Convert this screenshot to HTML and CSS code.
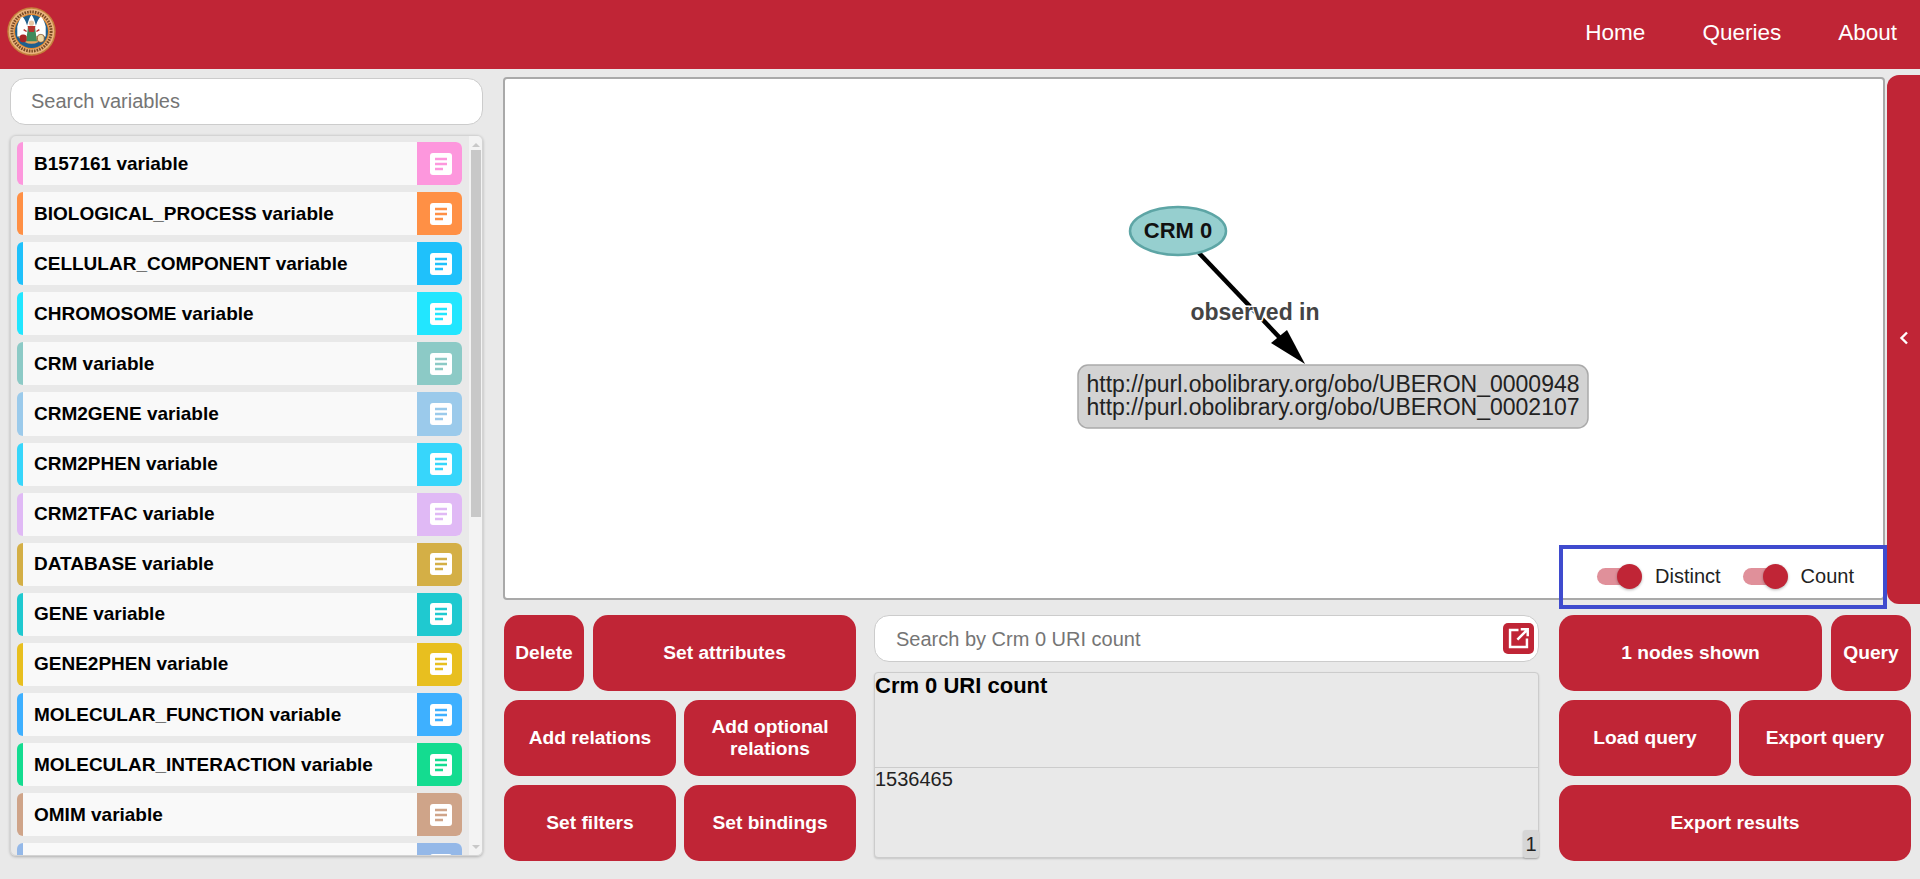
FILE: index.html
```html
<!DOCTYPE html>
<html lang="en">
<head>
<meta charset="utf-8">
<title>Query builder</title>
<link rel="stylesheet" href="styles.css">
</head>
<body>
<header class="navbar">
  <svg class="logo" viewBox="0 0 50 50" aria-label="University seal">
    <circle cx="25" cy="25" r="24.7" fill="#c4803c"/>
    <circle cx="25" cy="25" r="23.2" fill="#e9b27c"/>
    <circle cx="25" cy="25" r="20" fill="none" stroke="#7a4a24" stroke-width="3" stroke-dasharray="1.6 1.1"/>
    <circle cx="25" cy="25" r="18" fill="#e58a30"/>
    <circle cx="25" cy="25" r="16.8" fill="#1f5f8e"/>
    <path d="M10.5 30V20q2-8 5-10q3 2 5 9q2-8 4.500-11q2.500 3 4.500 11q2-7 5-9q3 2 5 10v10z" fill="#fff"/>
    <path d="M11 30q14 15 28 0z" fill="#e9a55c"/>
    <circle cx="25" cy="16.500" r="2.600" fill="#e8c7a5"/>
    <path d="M21.500 19.500h7l2 15.500h-11z" fill="#3f8a5b"/>
    <path d="M21 19.500h8l-1.500 6h-5z" fill="#b6332e"/>
    <path d="M17 23l3 2M33 23l-3 2" stroke="#b6332e" stroke-width="1.500"/>
    <rect x="13" y="28" width="7" height="8" rx="3" fill="#a92525"/>
    <rect x="31" y="28" width="7" height="8" rx="3" fill="#efd9a5" stroke="#7a4a24" stroke-width=".8"/>
  </svg>
  <nav class="nav-links">
    <a class="nav-link">Home</a>
    <a class="nav-link">Queries</a>
    <a class="nav-link">About</a>
  </nav>
</header>
<main class="main">
  <aside class="sidebar">
    <div class="search search-vars"><span class="placeholder">Search variables</span></div>
    <div class="var-panel">
      <div class="var-list">
        <div class="var-row" style="--c:#fd97dd"><span class="var-name">B157161 <span class="var-kind">variable</span></span><span class="var-btn"><svg class="doc" viewBox="0 0 22 22"><rect width="22" height="22" rx="3"/><path d="M5 6h12M5 11h12M5 16h8"/></svg></span></div>
        <div class="var-row" style="--c:#ff9045"><span class="var-name">BIOLOGICAL_PROCESS <span class="var-kind">variable</span></span><span class="var-btn"><svg class="doc" viewBox="0 0 22 22"><rect width="22" height="22" rx="3"/><path d="M5 6h12M5 11h12M5 16h8"/></svg></span></div>
        <div class="var-row" style="--c:#1fc1fb"><span class="var-name">CELLULAR_COMPONENT <span class="var-kind">variable</span></span><span class="var-btn"><svg class="doc" viewBox="0 0 22 22"><rect width="22" height="22" rx="3"/><path d="M5 6h12M5 11h12M5 16h8"/></svg></span></div>
        <div class="var-row" style="--c:#22e6ff"><span class="var-name">CHROMOSOME <span class="var-kind">variable</span></span><span class="var-btn"><svg class="doc" viewBox="0 0 22 22"><rect width="22" height="22" rx="3"/><path d="M5 6h12M5 11h12M5 16h8"/></svg></span></div>
        <div class="var-row" style="--c:#8ccac6"><span class="var-name">CRM <span class="var-kind">variable</span></span><span class="var-btn"><svg class="doc" viewBox="0 0 22 22"><rect width="22" height="22" rx="3"/><path d="M5 6h12M5 11h12M5 16h8"/></svg></span></div>
        <div class="var-row" style="--c:#9bcaeb"><span class="var-name">CRM2GENE <span class="var-kind">variable</span></span><span class="var-btn"><svg class="doc" viewBox="0 0 22 22"><rect width="22" height="22" rx="3"/><path d="M5 6h12M5 11h12M5 16h8"/></svg></span></div>
        <div class="var-row" style="--c:#37d6fb"><span class="var-name">CRM2PHEN <span class="var-kind">variable</span></span><span class="var-btn"><svg class="doc" viewBox="0 0 22 22"><rect width="22" height="22" rx="3"/><path d="M5 6h12M5 11h12M5 16h8"/></svg></span></div>
        <div class="var-row" style="--c:#e0b9f5"><span class="var-name">CRM2TFAC <span class="var-kind">variable</span></span><span class="var-btn"><svg class="doc" viewBox="0 0 22 22"><rect width="22" height="22" rx="3"/><path d="M5 6h12M5 11h12M5 16h8"/></svg></span></div>
        <div class="var-row" style="--c:#d4af46"><span class="var-name">DATABASE <span class="var-kind">variable</span></span><span class="var-btn"><svg class="doc" viewBox="0 0 22 22"><rect width="22" height="22" rx="3"/><path d="M5 6h12M5 11h12M5 16h8"/></svg></span></div>
        <div class="var-row" style="--c:#1fc9d0"><span class="var-name">GENE <span class="var-kind">variable</span></span><span class="var-btn"><svg class="doc" viewBox="0 0 22 22"><rect width="22" height="22" rx="3"/><path d="M5 6h12M5 11h12M5 16h8"/></svg></span></div>
        <div class="var-row" style="--c:#e8bf1f"><span class="var-name">GENE2PHEN <span class="var-kind">variable</span></span><span class="var-btn"><svg class="doc" viewBox="0 0 22 22"><rect width="22" height="22" rx="3"/><path d="M5 6h12M5 11h12M5 16h8"/></svg></span></div>
        <div class="var-row" style="--c:#3eb0ff"><span class="var-name">MOLECULAR_FUNCTION <span class="var-kind">variable</span></span><span class="var-btn"><svg class="doc" viewBox="0 0 22 22"><rect width="22" height="22" rx="3"/><path d="M5 6h12M5 11h12M5 16h8"/></svg></span></div>
        <div class="var-row" style="--c:#14dc90"><span class="var-name">MOLECULAR_INTERACTION <span class="var-kind">variable</span></span><span class="var-btn"><svg class="doc" viewBox="0 0 22 22"><rect width="22" height="22" rx="3"/><path d="M5 6h12M5 11h12M5 16h8"/></svg></span></div>
        <div class="var-row" style="--c:#cfa489"><span class="var-name">OMIM <span class="var-kind">variable</span></span><span class="var-btn"><svg class="doc" viewBox="0 0 22 22"><rect width="22" height="22" rx="3"/><path d="M5 6h12M5 11h12M5 16h8"/></svg></span></div>
        <div class="var-row" style="--c:#94b8e8"><span class="var-name"></span><span class="var-btn"><svg class="doc" viewBox="0 0 22 22"><rect width="22" height="22" rx="3"/><path d="M5 6h12M5 11h12M5 16h8"/></svg></span></div>
      </div>
      <div class="scrollbar">
        <span class="arrow-up"></span>
        <div class="scroll-track"><div class="scroll-thumb"></div></div>
        <span class="arrow-down"></span>
      </div>
    </div>
  </aside>
  <section class="workspace">
    <div class="top-row">
      <div class="canvas">
        <svg class="graph" viewBox="0 0 1382 523">
          <line class="edge" x1="696" y1="176" x2="778" y2="262"/>
          <polygon class="edge-head" points="802,287 768,266 784,253"/>
          <ellipse class="node-ellipse" cx="675" cy="154" rx="48" ry="24"/>
          <text class="node-label" x="675" y="161">CRM 0</text>
          <text class="edge-label" x="752" y="243">observed in</text>
          <rect class="node-box" x="575" y="288" width="510" height="63" rx="10"/>
          <text class="box-label" x="830" y="315">http://purl.obolibrary.org/obo/UBERON_0000948</text>
          <text class="box-label" x="830" y="338">http://purl.obolibrary.org/obo/UBERON_0002107</text>
        </svg>
        <div class="toggles">
          <label class="toggle"><span class="track"><span class="thumb"></span></span>Distinct</label>
          <label class="toggle"><span class="track"><span class="thumb"></span></span>Count</label>
        </div>
      </div>
      <div class="side-tab">
        <svg class="chevron" viewBox="0 0 10 14"><path d="M8 1.5 2.5 7 8 12.5"/></svg>
      </div>
    </div>
    <div class="bottom-row">
      <div class="btn-grid">
        <button class="btn btn-narrow">Delete</button>
        <button class="btn btn-wide">Set attributes</button>
        <button class="btn btn-half">Add relations</button>
        <button class="btn btn-half">Add optional relations</button>
        <button class="btn btn-half">Set filters</button>
        <button class="btn btn-half">Set bindings</button>
      </div>
      <div class="results">
        <div class="search search-results">
          <span class="placeholder">Search by Crm 0 URI count</span>
          <span class="open-btn"><svg viewBox="0 0 24 24"><path d="M12 4.500H4.500v15h15V12M11 13 19.500 4.500M14 3.800h6.200V10"/></svg></span>
        </div>
        <div class="result-table">
          <div class="result-head">Crm 0 URI count</div>
          <div class="result-cell">1536465</div>
          <span class="pager">1</span>
        </div>
      </div>
      <div class="btn-grid">
        <button class="btn btn-wide">1 nodes shown</button>
        <button class="btn btn-narrow-r">Query</button>
        <button class="btn btn-half">Load query</button>
        <button class="btn btn-half">Export query</button>
        <button class="btn btn-full">Export results</button>
      </div>
    </div>
  </section>
</main>
</body>
</html>
```

FILE: styles.css
```css
* { box-sizing: border-box; }
html, body { margin: 0; height: 100%; }
body {
  background: #e9e9e9;
  font-family: "Liberation Sans", Arial, sans-serif;
  color: #212529;
  overflow: hidden;
}
.navbar {
  height: 69px;
  background: #c02536;
  display: flex;
  align-items: center;
  justify-content: space-between;
  padding-left: 7px;
}
.logo { width: 49px; height: 49px; margin-top: -6px; }
.nav-links { display: flex; margin-top: -3px; }
.nav-link { color: #fff; font-size: 22.5px; line-height: 26px; margin-right: 23px; margin-left: 34px; }

.main { display: flex; padding-left: 10px; }
.sidebar { width: 473px; margin-right: 20px; padding-top: 9px; flex: none; }
.search {
  background: #fff;
  border: 1px solid #ccc;
  border-radius: 15px;
  display: flex;
  align-items: center;
  font-size: 20px;
}
.placeholder { color: #757575; }
.search-vars { height: 47px; padding-left: 20px; padding-bottom: 1px; }
.var-panel {
  margin-top: 10px;
  height: 721px;
  display: flex;
  justify-content: space-between;
  border: 1px solid #d4d4d4;
  border-radius: 6px;
  box-shadow: 0 1px 3px rgba(0,0,0,.25);
  overflow: hidden;
}
.var-list { width: 458px; padding: 6px 0 0 6px; overflow: hidden; flex: none; }
.var-row {
  display: flex;
  align-items: stretch;
  justify-content: space-between;
  height: 43.1px;
  margin-bottom: 7px;
  width: 445px;
  flex: none;
  background: #f9f9f9;
  border-left: 6px solid var(--c);
  border-radius: 6px;
  overflow: hidden;
}
.var-name { font-size: 19px; font-weight: 700; color: #000; padding: 10.5px 0 0 11px; line-height: 22px; }
.var-kind { font-weight: 700; }
.var-btn {
  width: 45px;
  background: var(--c);
  display: flex;
  align-items: center;
  justify-content: center;
  padding-left: 2px;
}
.doc { width: 22px; height: 22px; }
.doc rect { fill: #fff; }
.doc path { fill: none; stroke: var(--c); stroke-width: 2.4; }
.scrollbar {
  width: 14px;
  background: #f3f3f3;
  display: flex;
  flex-direction: column;
  align-items: center;
  padding-top: 6px;
}
.arrow-up { width: 0; height: 0; border: 4px solid transparent; border-top: 0; border-bottom: 4px solid #c8c8c8; flex: none; margin-bottom: 3px; margin-top: 1px; }
.arrow-down { width: 0; height: 0; border: 4px solid transparent; border-bottom: 0; border-top: 4px solid #c8c8c8; flex: none; margin-bottom: 6px; }
.scroll-track { flex: 1; width: 10px; }
.scroll-thumb { height: 367px; background: #c8c8c8; }

.workspace { flex: 1; min-width: 0; padding-top: 6px; }
.top-row { display: flex; height: 529px; }
.canvas {
  position: relative;
  width: 1382px;
  height: 523px;
  margin-top: 2px;
  background: #fff;
  border: 2px solid #a9a9a9;
  border-radius: 4px;
  flex: none;
}
.graph { position: absolute; left: -2px; top: -2px; width: 1382px; height: 523px; }
.edge { stroke: #000; stroke-width: 4.5; }
.edge-head { fill: #000; }
.node-ellipse { fill: #96cfcf; stroke: #5da5a5; stroke-width: 2.5; }
.node-label { font: 700 22px "Liberation Sans", Arial, sans-serif; text-anchor: middle; fill: #111; }
.edge-label { font: 700 23px "Liberation Sans", Arial, sans-serif; text-anchor: middle; fill: #444; stroke: #fff; stroke-width: 3; paint-order: stroke; }
.node-box { fill: #d3d3d3; stroke: #aaa; stroke-width: 1.5; }
.box-label { font: 23px "Liberation Sans", Arial, sans-serif; text-anchor: middle; fill: #222; }
.toggles {
  position: absolute;
  right: -4px;
  bottom: -11px;
  width: 328px;
  height: 64px;
  border: 4px solid #3f4bce;
  display: flex;
  align-items: center;
  padding: 0 0 2px 34px;
  gap: 22px;
}
.toggle { display: flex; align-items: center; font-size: 20px; color: #222; }
.track {
  position: relative;
  display: block;
  width: 43px;
  height: 17px;
  background: #e0909a;
  border-radius: 9px;
  margin-right: 15px;
}
.thumb {
  position: absolute;
  right: -2px;
  top: -4px;
  width: 25px;
  height: 25px;
  border-radius: 50%;
  background: #c02536;
  box-shadow: 0 1px 3px rgba(0,0,0,.3);
}
.side-tab {
  width: 34px;
  height: 529px;
  margin-left: 2px;
  background: #c02536;
  border-radius: 12px 0 0 12px;
  display: flex;
  align-items: center;
  justify-content: center;
  flex: none;
}
.chevron { width: 10px; height: 14px; margin-top: -4px; }
.chevron path { fill: none; stroke: #fff; stroke-width: 2.4; }

.bottom-row { display: flex; margin-top: 11px; padding-left: 1px; }
.btn-grid {
  width: 352px;
  flex: none;
  display: flex;
  flex-wrap: wrap;
  gap: 9px 8px;
  align-content: flex-start;
}
.btn {
  height: 76px;
  background: #c02536;
  color: #fff;
  border: 0;
  border-radius: 15px;
  font: 700 19.2px/22px "Liberation Sans", Arial, sans-serif;
  padding: 0 8px;
}
.btn-narrow { width: 80px; margin-right: 1px; }
.btn-wide { width: 263px; }
.btn-half { width: 172px; }
.btn-narrow-r { width: 80px; margin-left: 1px; padding: 0; }
.btn-full { width: 352px; }
.results { width: 665px; margin: 0 20px 0 18px; flex: none; }
.search-results { height: 47px; padding-left: 21px; justify-content: space-between; padding-right: 4px; }
.search-results .placeholder { padding-top: 2px; }
.open-btn {
  width: 31px;
  height: 31px;
  background: #c02536;
  border-radius: 5px;
  display: flex;
  align-items: center;
  justify-content: center;
}
.open-btn svg { width: 27px; height: 27px; }
.open-btn path { fill: none; stroke: #fff; stroke-width: 2.2; }
.result-table {
  position: relative;
  margin-top: 10px;
  height: 186px;
  border: 1px solid #ccc;
  border-radius: 4px;
  box-shadow: 0 1px 2px rgba(0,0,0,.15);
  background: #e9e9e9;
  color: #222;
}
.result-head { height: 95px; border-bottom: 1px solid #ccc; font-size: 22px; font-weight: 700; line-height: 26px; color: #000; }
.result-cell { font-size: 20px; line-height: 22px; }
.pager {
  position: absolute;
  right: -1px;
  bottom: -1px;
  width: 16px;
  height: 28px;
  background: #d6d6d6;
  border-radius: 3px;
  font-size: 20px;
  line-height: 28px;
  text-align: center;
  box-shadow: 0 1px 2px rgba(0,0,0,.2);
}
```
